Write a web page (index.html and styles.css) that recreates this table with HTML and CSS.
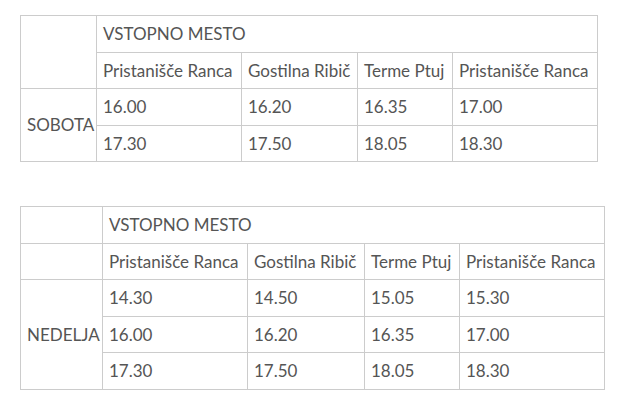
FILE: index.html
```html
<!DOCTYPE html>
<html lang="sl">
<head>
<meta charset="utf-8">
<link rel="stylesheet" href="styles.css">
</head>
<body>
<div class="page">
  <table class="urnik urnik-sobota">
    <colgroup>
      <col class="c-dan-s"><col class="c-a"><col class="c-b"><col class="c-c"><col class="c-d">
    </colgroup>
    <tr>
      <td rowspan="2"></td>
      <td colspan="4">VSTOPNO MESTO</td>
    </tr>
    <tr>
      <td>Pristanišče Ranca</td><td>Gostilna Ribič</td><td>Terme Ptuj</td><td>Pristanišče Ranca</td>
    </tr>
    <tr>
      <td rowspan="2">SOBOTA</td>
      <td>16.00</td><td>16.20</td><td>16.35</td><td>17.00</td>
    </tr>
    <tr>
      <td>17.30</td><td>17.50</td><td>18.05</td><td>18.30</td>
    </tr>
  </table>

  <table class="urnik urnik-nedelja">
    <colgroup>
      <col class="c-dan-n"><col class="c-a"><col class="c-b2"><col class="c-c"><col class="c-d">
    </colgroup>
    <tr>
      <td></td>
      <td colspan="4">VSTOPNO MESTO</td>
    </tr>
    <tr>
      <td></td>
      <td>Pristanišče Ranca</td><td>Gostilna Ribič</td><td>Terme Ptuj</td><td>Pristanišče Ranca</td>
    </tr>
    <tr>
      <td rowspan="3">NEDELJA</td>
      <td>14.30</td><td>14.50</td><td>15.05</td><td>15.30</td>
    </tr>
    <tr>
      <td>16.00</td><td>16.20</td><td>16.35</td><td>17.00</td>
    </tr>
    <tr>
      <td>17.30</td><td>17.50</td><td>18.05</td><td>18.30</td>
    </tr>
  </table>
</div>
</body>
</html>
```
FILE: styles.css
```css
html, body {
  margin: 0;
  padding: 0;
  background: #fff;
}
.page {
  padding: 15px 20px 0;
  font-family: "Source Sans Pro", Lato, "Liberation Sans", sans-serif;
  font-size: 17px;
  color: #555;
}
.urnik {
  border-collapse: collapse;
  table-layout: fixed;
  margin-bottom: 44px;
}
.urnik:last-child { margin-bottom: 0; }
.urnik-sobota { width: 578px; }
.urnik-nedelja { width: 585px; }
.urnik td {
  border: 1px solid #ccc;
  padding: 7px 6px;
  height: 21.5px;
  line-height: 21.5px;
  text-align: left;
  vertical-align: middle;
  white-space: nowrap;
  overflow: hidden;
}
.c-dan-s { width: 76px; }
.c-dan-n { width: 82px; }
.c-a { width: 145px; }
.c-b { width: 116px; }
.c-b2 { width: 117px; }
.c-c { width: 95px; }
.c-d { width: 145px; }
```
